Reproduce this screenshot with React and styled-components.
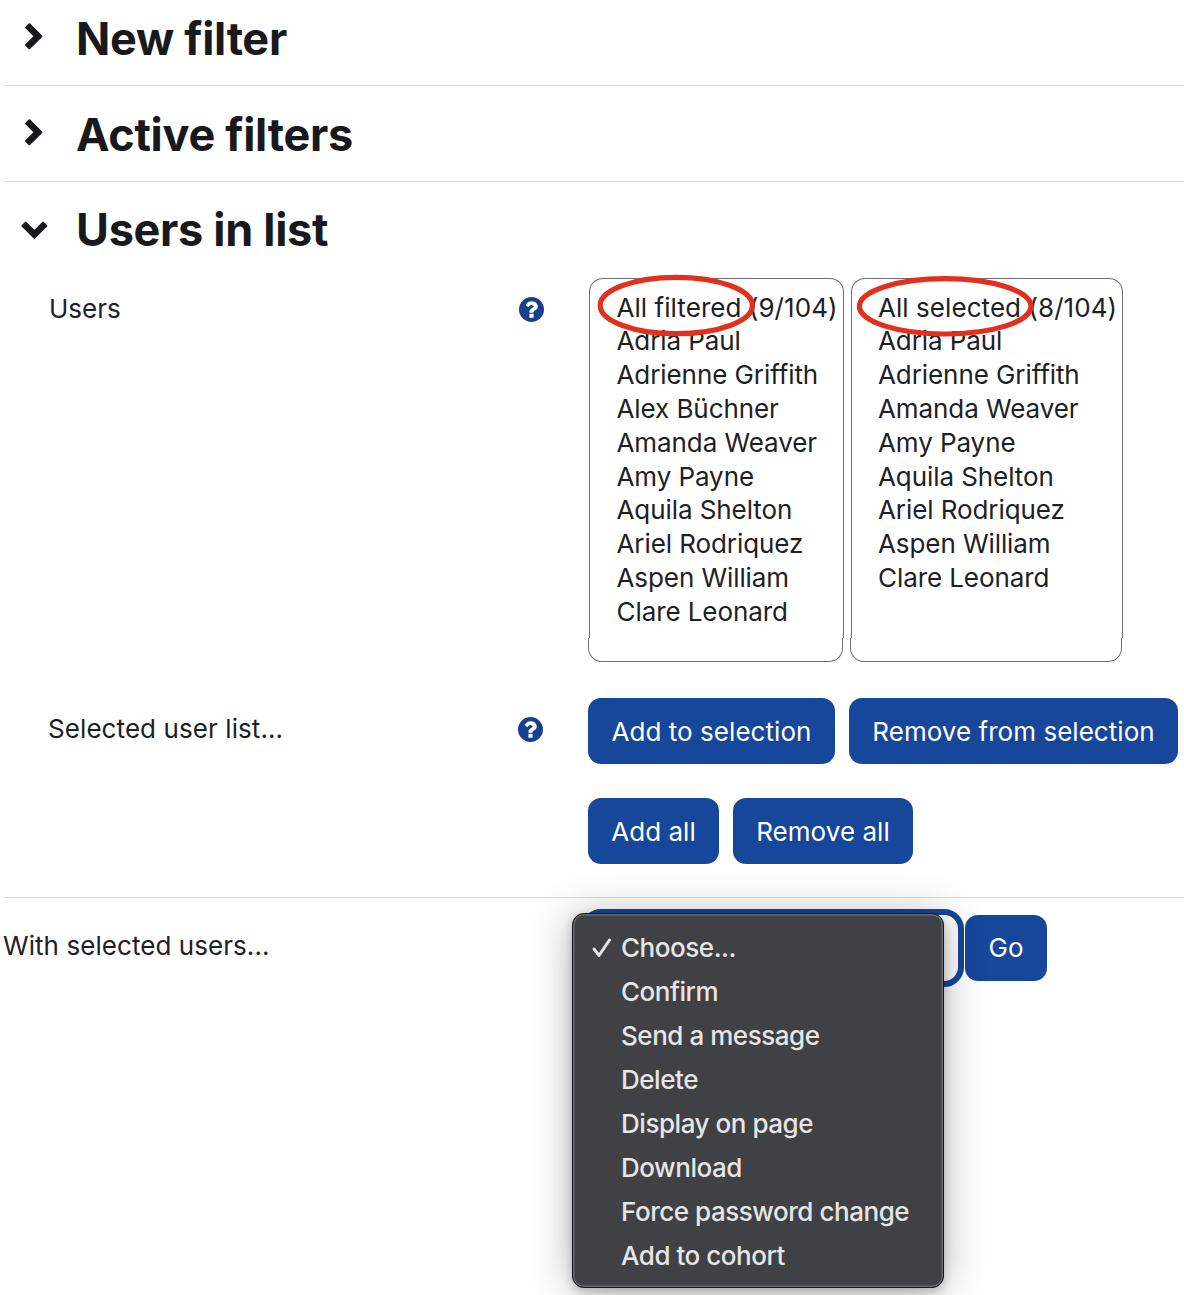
import React from "react";
import styled, { createGlobalStyle } from "styled-components";

const Global = createGlobalStyle`
  * { box-sizing: border-box; }
  html, body { margin: 0; background: #fff; overflow: hidden; }
  body { font-family: Inter, "Liberation Sans", sans-serif; font-size: 26px; color: #1d2125; }
`;

const Page = styled.main`
  width: 1184px;
  height: 1295px;
  padding-left: 4px;
  overflow: hidden;
`;

const SectionHeader = styled.header`
  display: flex;
  align-items: center;
  gap: 24px;
  height: ${(p) => p.$height}px;
  padding: ${(p) => p.$pad} 0 0;
  padding: ${(p) => p.$pad};
  border-bottom: ${(p) => (p.$last ? "none" : "1px solid #dcdcde")};
`;

const Chevron = styled.svg`
  display: block;
  width: 32px;
  height: 32px;
  flex: none;
  fill: #18191d;
  stroke: #18191d;
  stroke-width: 2;
  stroke-linejoin: round;
`;

const Title = styled.h3`
  margin: 0;
  font-size: 45px;
  line-height: 56px;
  font-weight: 700;
  letter-spacing: -0.3px;
  color: #18191d;
  white-space: nowrap;
`;

const FormRow = styled.section`
  display: grid;
  grid-template-columns: 540px 1fr;
  height: ${(p) => p.$height}px;
  padding-left: 44px;
`;

const LabelCell = styled.div`
  display: flex;
  justify-content: space-between;
  align-items: center;
  height: 62px;
  padding: 0 ${(p) => 45 - (p.$inset || 0)}px 0 ${(p) => p.$inset || 0}px;
`;

const Text = styled.span`
  padding-bottom: 2px;
  letter-spacing: ${(p) => p.$track || 0}px;
  white-space: nowrap;
`;

const HelpSvg = styled.svg`
  display: block;
  width: 25px;
  height: 25px;
  fill: #173f8f;
`;

const Lists = styled.div`
  position: relative;
  display: flex;
  align-items: flex-start;
  gap: 7px;
  padding-left: 1px;
`;

const ListBox = styled.div`
  display: flex;
  flex-direction: column;
  width: ${(p) => p.$width}px;
`;

const Options = styled.ul`
  list-style: none;
  margin: 0;
  height: 360px;
  padding: 11.6px 0 0 ${(p) => p.$indent}px;
  border: 1px solid #6c6f79;
  border-bottom: 0;
  border-radius: 14px 14px 0 0;
`;

const Option = styled.li`
  height: 33.8px;
  line-height: 34px;
  letter-spacing: ${(p) => p.$track}px;
  white-space: nowrap;
`;

const ListFoot = styled.div`
  height: 24px;
  margin: 0 1px 0 -1px;
  border: 1px solid #6c6f79;
  border-top: 0;
  border-radius: 0 0 14px 14px;
`;

const Marks = styled.svg`
  position: absolute;
  left: 0;
  top: -10px;
  width: 540px;
  height: 80px;
  fill: none;
  stroke: #e1301e;
  stroke-width: 5.2;
`;

const ButtonRows = styled.div`
  display: flex;
  flex-direction: column;
  gap: 34px;
`;

const ButtonRow = styled.div`
  display: flex;
  gap: 14px;
`;

const Button = styled.button`
  flex: none;
  width: ${(p) => p.$width}px;
  height: 66px;
  padding: 0 0 ${(p) => p.$lift || 0}px;
  border: 0;
  border-radius: 13px;
  background: #17479b;
  color: #fff;
  font: inherit;
  letter-spacing: 0.04px;
  white-space: nowrap;
`;

const ActionBar = styled.footer`
  display: grid;
  grid-template-columns: 577px 384px auto;
  align-items: start;
  padding-top: 11px;
  border-top: 1px solid #dcdcde;
`;

const ActionLabel = styled.div`
  height: 77px;
  line-height: 74px;
  margin-left: -1px;
  letter-spacing: 0.06px;
`;

const Select = styled.div`
  position: relative;
  width: 383px;
  height: 78px;
  border: 6px solid #17479b;
  border-radius: 20px;
`;

const Menu = styled.ul`
  position: absolute;
  left: -15px;
  top: -2px;
  width: 372px;
  height: 375px;
  margin: 0;
  padding: 12px 0 0;
  list-style: none;
  border: 1px solid #17191f;
  border-radius: 12px;
  background: #404145;
  box-shadow: inset 0 0 0 1.5px #66676d, 0 4px 10px rgba(0, 0, 0, 0.2), 0 2px 42px rgba(0, 0, 0, 0.3);
  color: #e6e6e7;
`;

const MenuItem = styled.li`
  display: grid;
  grid-template-columns: 31px 1fr;
  align-items: center;
  height: 44px;
  padding-left: 17px;
  line-height: 44px;
  font-weight: 500;
  letter-spacing: -0.46px;
  white-space: nowrap;
`;

const Tick = styled.svg`
  display: block;
  width: 22px;
  height: 22px;
  fill: none;
  stroke: #e6e6e7;
  stroke-width: 3;
  stroke-linecap: round;
  stroke-linejoin: round;
`;

const GoWrap = styled.div`
  padding-top: 6px;
`;

const filtered = ["Adria Paul", "Adrienne Griffith", "Alex Büchner", "Amanda Weaver", "Amy Payne", "Aquila Shelton", "Ariel Rodriquez", "Aspen William", "Clare Leonard"];
const selected = filtered.filter((name) => name !== "Alex Büchner");
const actions = ["Choose...", "Confirm", "Send a message", "Delete", "Display on page", "Download", "Force password change", "Add to cohort"];

function Help() {
  return (
    <HelpSvg viewBox="128 128 1536 1536">
      <circle cx="896" cy="896" r="768" />
      <path
        fill="#fff"
        d="M1024 1376v-192q0-14-9-23t-23-9h-192q-14 0-23 9t-9 23v192q0 14 9 23t23 9h192q14 0 23-9t9-23zm256-672q0-88-55.5-163t-138.5-116-170-41q-243 0-371 213-15 24 8 42l132 100q7 6 19 6 16 0 25-12 53-68 86-92 34-24 86-24 48 0 85.5 26t37.5 59q0 38-20 61t-68 45q-63 28-115.5 86.5t-52.5 125.5v36q0 14 9 23t23 9h192q14 0 23-9t9-23q0-19 21.5-49.5t54.5-49.5q32-18 49-28.5t46-35 44.5-48 28-60.5 12.5-81z"
      />
    </HelpSvg>
  );
}

function UserList({ title, names, width, indent }) {
  return (
    <ListBox $width={width}>
      <Options $indent={indent}>
        <Option $track={0.06}>{title}</Option>
        {names.map((name) => <Option key={name} $track={-0.08}>{name}</Option>)}
      </Options>
      <ListFoot />
    </ListBox>
  );
}

function Section({ title, height, pad, open }) {
  return (
    <SectionHeader $height={height} $pad={pad} $last={open}>
      <Chevron viewBox="0 0 32 32">
        <path
          d={open
            ? "M14.4 23.9 L26.4 11.9 L23.1 8.6 L14.4 17.3 L5.7 8.6 L2.4 11.9 Z"
            : "M21.4 13.3 L9.4 1.3 L6.1 4.6 L14.8 13.3 L6.1 22 L9.4 25.3 Z"}
        />
      </Chevron>
      <Title>{title}</Title>
    </SectionHeader>
  );
}

export default function App() {
  return (
    <Page>
      <Global />
      <Section title="New filter" height={86} pad="0 0 8px 16px" />
      <Section title="Active filters" height={96} pad="2px 0 0 16px" />
      <Section title="Users in list" height={96} pad="0 0 1px 16px" open />
      <FormRow $height={420}>
        <LabelCell $inset={1}><Text>Users</Text><Help /></LabelCell>
        <Lists>
          <UserList title="All filtered (9/104)" names={filtered} width={255} indent={26.5} />
          <UserList title="All selected (8/104)" names={selected} width={272} indent={26} />
          <Marks viewBox="0 0 540 80">
            <ellipse cx="88.3" cy="37.5" rx="76.1" ry="28.2" />
            <ellipse cx="357.2" cy="38.3" rx="85.8" ry="27.7" />
          </Marks>
        </Lists>
      </FormRow>
      <FormRow $height={199}>
        <LabelCell><Text $track={0.08}>Selected user list...</Text><Help /></LabelCell>
        <ButtonRows>
          <ButtonRow>
            <Button $width={247}>Add to selection</Button>
            <Button $width={329}>Remove from selection</Button>
          </ButtonRow>
          <ButtonRow>
            <Button $width={131}>Add all</Button>
            <Button $width={180}>Remove all</Button>
          </ButtonRow>
        </ButtonRows>
      </FormRow>
      <ActionBar>
        <ActionLabel>With selected users...</ActionLabel>
        <Select>
          <Menu>
            {actions.map((label, i) => (
              <MenuItem key={label}>
                <span>{i === 0 && <Tick viewBox="0 0 22 22"><path d="M4 12 L9 18.5 L19.5 3" /></Tick>}</span>
                <span>{label}</span>
              </MenuItem>
            ))}
          </Menu>
        </Select>
        <GoWrap><Button $width={82} $lift={2}>Go</Button></GoWrap>
      </ActionBar>
    </Page>
  );
}
